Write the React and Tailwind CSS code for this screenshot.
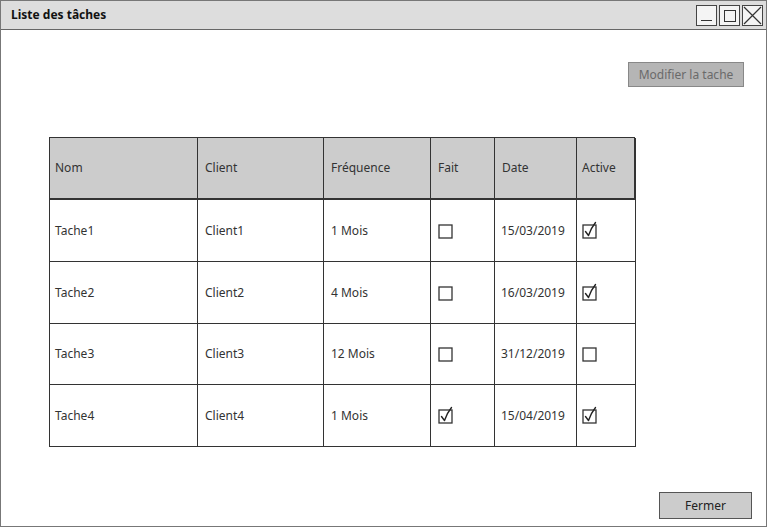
import React from 'react';

const font = { fontFamily: '"Comic Sans MS", "Noto Sans", "DejaVu Sans", sans-serif' };

const rows = [
  { nom: 'Tache1', client: 'Client1', freq: '1 Mois', fait: false, date: '15/03/2019', active: true, h: 'h-[62px]' },
  { nom: 'Tache2', client: 'Client2', freq: '4 Mois', fait: false, date: '16/03/2019', active: true, h: 'h-[62px]' },
  { nom: 'Tache3', client: 'Client3', freq: '12 Mois', fait: false, date: '31/12/2019', active: false, h: 'h-[61px]' },
  { nom: 'Tache4', client: 'Client4', freq: '1 Mois', fait: true, date: '15/04/2019', active: true, h: 'h-[62px]' },
];

function Check({ checked }) {
  return (
    <svg width="18" height="20" viewBox="0 0 18 20" className="block">
      <rect x="1" y="4" width="13" height="13" fill="white" stroke="#333" strokeWidth="1.3" />
      {checked && (
        <path d="M3.5 10.5 L6.5 14.5 Q9 7 13.5 1.5" fill="none" stroke="#222" strokeWidth="1.4" strokeLinecap="round" strokeLinejoin="round" />
      )}
    </svg>
  );
}

function WinButton({ children }) {
  return (
    <div className="w-[21px] h-[21px] border border-[#444] bg-[#f4f4f4] flex items-center justify-center">
      {children}
    </div>
  );
}

function Cell({ children, className = '' }) {
  return (
    <div className={`border-r border-b border-[#333] flex items-center text-[12px] text-[#333] ${className}`}>
      {children}
    </div>
  );
}

export default function App() {
  return (
    <div className="w-[767px] h-[527px] bg-white border border-[#777] flex flex-col overflow-hidden" style={font}>
      {/* title bar */}
      <div className="h-[29px] shrink-0 bg-[#dddddd] border-b border-[#666] flex items-center justify-between pl-[10px] pr-[3px]">
        <span className="text-[12px] font-bold text-[#111]">Liste des tâches</span>
        <div className="flex gap-[2px] mt-[1px]">
          <WinButton>
            <div className="w-[11px] h-[1.5px] bg-[#333] mt-[10px]" />
          </WinButton>
          <WinButton>
            <div className="w-[12px] h-[12px] border border-[#333]" />
          </WinButton>
          <WinButton>
            <svg width="19" height="19" viewBox="0 0 19 19">
              <path d="M1 1 L18 18 M18 1 L1 18" stroke="#333" strokeWidth="1.2" />
            </svg>
          </WinButton>
        </div>
      </div>

      <div className="flex-1 flex flex-col">
        <div className="flex justify-end pt-[32px] pr-[22px]">
          <button className="w-[116px] h-[25px] bg-[#b5b5b5] border border-[#888] text-[12px] text-[#6a6a6a]">
            Modifier la tache
          </button>
        </div>

        <div className="ml-[48px] mt-[50px] w-[586px] border-l border-t border-[#333] grid grid-cols-[148px_126px_107px_64px_82px_59px]">
          <Cell className="h-[62px] bg-[#cccccc] pl-[5px] border-b-2">Nom</Cell>
          <Cell className="h-[62px] bg-[#cccccc] pl-[7px] border-b-2">Client</Cell>
          <Cell className="h-[62px] bg-[#cccccc] pl-[7px] border-b-2">Fréquence</Cell>
          <Cell className="h-[62px] bg-[#cccccc] pl-[7px] border-b-2">Fait</Cell>
          <Cell className="h-[62px] bg-[#cccccc] pl-[7px] border-b-2">Date</Cell>
          <Cell className="h-[62px] bg-[#cccccc] pl-[5px] border-r-2 border-b-2">Active</Cell>
          {rows.map((r) => (
            <React.Fragment key={r.nom}>
              <Cell className={`${r.h} pl-[5px]`}>{r.nom}</Cell>
              <Cell className={`${r.h} pl-[7px]`}>{r.client}</Cell>
              <Cell className={`${r.h} pl-[7px]`}>{r.freq}</Cell>
              <Cell className={`${r.h} pl-[7px]`}><Check checked={r.fait} /></Cell>
              <Cell className={`${r.h} pl-[6px]`}>{r.date}</Cell>
              <Cell className={`${r.h} pl-[5px]`}><Check checked={r.active} /></Cell>
            </React.Fragment>
          ))}
        </div>

        <div className="flex-1" />
        <div className="flex justify-end pr-[14px] pb-[7px]">
          <button className="w-[93px] h-[27px] bg-[#cccccc] border border-[#555] text-[12px] text-[#222]">
            Fermer
          </button>
        </div>
      </div>
    </div>
  );
}
